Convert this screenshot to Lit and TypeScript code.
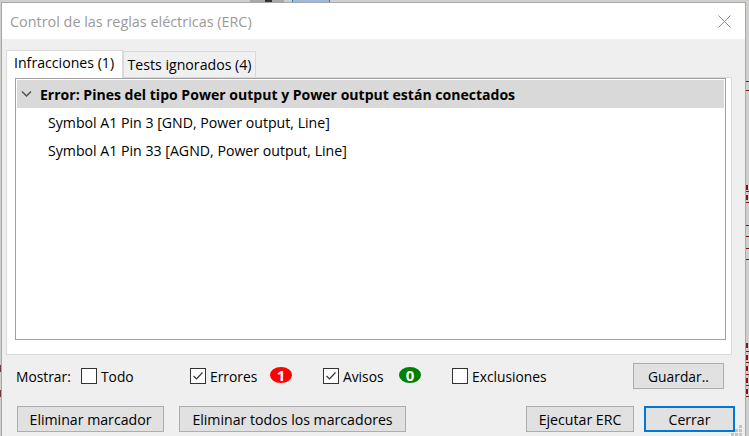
import {html, css, LitElement} from 'lit';
import {customElement} from 'lit/decorators.js';

// bits of the schematic that show round the dialog
const RIGHT_LINES = [81, 90, 191, 202, 225, 236, 248, 259, 351, 362, 374, 385, 396];
const RIGHT_BITS = [185, 195, 343, 355, 366, 378, 389];

@customElement('app-root')
export class AppRoot extends LitElement {
  static styles = css`
  :host {
    background-color: #cfcfcd;
    color: #000;
    display: block;
    font-family: "Open Sans", "Noto Sans", sans-serif;
    font-size: 14.15px;
    height: 436px;
    overflow: hidden;
    position: relative;
    width: 749px;
  }

  .mark {
    background-color: #8b1010;
    height: 1px;
    left: 746px;
    position: absolute;
    width: 3px;
  }

  .mark.bit {
    height: 5px;
    width: 2px;
  }

  .mark.left {
    background-color: #6e3a3a;
    height: 7px;
    left: 0;
    width: 1px;
  }

  #strip-grey {
    background-color: #a8a8a8;
    height: 2px;
    left: 250px;
    position: absolute;
    top: 0;
    width: 34px;
  }

  #strip-dark {
    background-color: #333;
    height: 2px;
    left: 265px;
    position: absolute;
    top: 0;
    width: 7px;
  }

  #strip-blue {
    background-color: #9bbbdc;
    border-left: 1px solid #1f7fd0;
    border-right: 1px solid #1f7fd0;
    box-sizing: border-box;
    height: 2px;
    left: 292px;
    position: absolute;
    top: 0;
    width: 38px;
  }

  #window {
    background-color: #efefef;
    border-left: 1px solid #a8a8a8;
    border-right: 1px solid #a8a8a8;
    border-top: 1px solid #a8a8a8;
    box-sizing: border-box;
    height: 434px;
    margin: 2px 0 0 1px;
    position: relative;
    width: 745px;
  }

  #titlebar {
    align-items: center;
    background-color: #fff;
    box-sizing: border-box;
    color: #9a9a9a;
    display: flex;
    font-size: 14.4px;
    height: 36px;
    justify-content: space-between;
    padding: 0 14px 0 8px;
  }

  #close {
    display: block;
    height: 13px;
    width: 13px;
  }

  #body {
    padding: 10px 10px 0 4px;
  }

  #tabs {
    align-items: flex-end;
    display: flex;
    height: 28px;
  }

  .tab {
    align-items: center;
    background-color: #f0f0f0;
    border: 1px solid #d9d9d9;
    border-bottom: none;
    box-sizing: border-box;
    display: flex;
    height: 26px;
    justify-content: center;
    padding: 0 3px;
    width: 133px;
  }

  .tab.active {
    background-color: #fff;
    height: 28px;
    justify-content: flex-start;
    margin-bottom: -1px;
    padding: 0 6px 4px 7px;
    position: relative;
    width: 117px;
    z-index: 1;
  }

  #panel {
    background-color: #fff;
    border: 1px solid #d9d9d9;
    box-sizing: border-box;
    height: 278px;
    margin-right: 3px;
    padding: 0 5px 0 8px;
  }

  #list {
    border: 1px solid #a0a0a0;
    box-sizing: border-box;
    height: 262px;
    padding: 1px;
  }

  .group {
    align-items: center;
    background-color: #d9d9d9;
    display: flex;
    font-size: 14.05px;
    font-weight: 700;
    height: 28px;
  }

  .chevron {
    display: block;
    height: 6px;
    margin: 0 8px 0 4px;
    width: 11px;
  }

  .item {
    align-items: center;
    display: flex;
    height: 28px;
    padding-left: 31px;
  }

  #filters {
    align-items: center;
    display: flex;
    font-size: 13.8px;
    height: 26px;
    margin-top: 8px;
    padding: 0 11px 0 10px;
  }

  .check {
    align-items: center;
    display: flex;
    gap: 4px;
  }

  .box {
    background-color: #fff;
    border: 1px solid #333;
    box-sizing: border-box;
    height: 16px;
    width: 16px;
  }

  .box svg {
    display: block;
  }

  .badge {
    border-radius: 50%;
    color: #fff;
    font-size: 15px;
    font-weight: 700;
    height: 16px;
    line-height: 16px;
    margin-top: -2px;
    text-align: center;
    width: 22px;
  }

  .red {
    background-color: #f00;
  }

  .green {
    background-color: #008000;
  }

  button {
    background-color: #e1e1e1;
    border: 1px solid #adadad;
    box-sizing: border-box;
    color: #000;
    font: inherit;
    height: 26px;
    padding: 0;
  }

  #actions {
    align-items: center;
    display: flex;
    margin-top: 17px;
    padding: 0 0 0 11px;
  }

  #cerrar {
    border: 2px solid #0078d7;
  }

  #grip {
    bottom: 0;
    display: block;
    position: absolute;
    right: 3px;
  }
  `;

  private checkbox(label: string, checked: boolean) {
    return html`
    <label class="check">
      <span class="box">
        ${checked ? html`
        <svg width="14" height="14" viewBox="0 0 14 14">
          <path d="M2.5 7 L5.5 10 L11.5 3.5" fill="none" stroke="#333" stroke-width="1.2"/>
        </svg>` : ''}
      </span>
      ${label}
    </label>
    `;
  }

  render() {
    return html`
    ${RIGHT_LINES.map((y) => html`<div class="mark" style="top:${y}px"></div>`)}
    ${RIGHT_BITS.map((y) => html`<div class="mark bit" style="top:${y}px"></div>`)}
    ${[365, 390].map((y) => html`<div class="mark left" style="top:${y}px"></div>`)}
    <div id="strip-grey"></div>
    <div id="strip-dark"></div>
    <div id="strip-blue"></div>
    <div id="window">
      <div id="titlebar">
        <span>Control de las reglas eléctricas (ERC)</span>
        <svg id="close" viewBox="0 0 13 13">
          <path d="M0.5 0.5 L12.5 12.5 M12.5 0.5 L0.5 12.5" fill="none" stroke="#8a8a8a"/>
        </svg>
      </div>
      <div id="body">
        <div id="tabs">
          <div class="tab active">Infracciones (1)</div>
          <div class="tab">Tests ignorados (4)</div>
        </div>
        <div id="panel">
          <div id="list">
            <div class="group">
              <svg class="chevron" viewBox="0 0 11 6">
                <path d="M1 0.5 L5.5 5 L10 0.5" fill="none" stroke="#555" stroke-width="1.5"/>
              </svg>
              Error: Pines del tipo Power output y Power output están conectados
            </div>
            <div class="item">Symbol A1 Pin 3 [GND, Power output, Line]</div>
            <div class="item">Symbol A1 Pin 33 [AGND, Power output, Line]</div>
          </div>
        </div>
        <div id="filters">
          <span style="width:65px">Mostrar:</span>
          <span style="width:109px">${this.checkbox('Todo', false)}</span>
          <span style="width:80px">${this.checkbox('Errores', true)}</span>
          <span class="badge red" style="margin-right:31px">1</span>
          <span style="width:76px">${this.checkbox('Avisos', true)}</span>
          <span class="badge green" style="margin-right:31px">0</span>
          ${this.checkbox('Exclusiones', false)}
          <button style="margin-left:auto;width:91px">Guardar..</button>
        </div>
        <div id="actions">
          <button style="width:147px">Eliminar marcador</button>
          <button style="width:227px;margin-left:15px">Eliminar todos los marcadores</button>
          <button style="width:108px;margin-left:auto">Ejecutar ERC</button>
          <button id="cerrar" style="width:91px;margin-left:10px">Cerrar</button>
        </div>
      </div>
      <svg id="grip" width="11" height="11" viewBox="0 0 11 11" fill="#c4c4c4">
        <rect x="8" y="0" width="3" height="3"/>
        <rect x="4" y="4" width="3" height="3"/>
        <rect x="8" y="4" width="3" height="3"/>
        <rect x="0" y="8" width="3" height="3"/>
        <rect x="4" y="8" width="3" height="3"/>
        <rect x="8" y="8" width="3" height="3"/>
      </svg>
    </div>
    `;
  }
}
